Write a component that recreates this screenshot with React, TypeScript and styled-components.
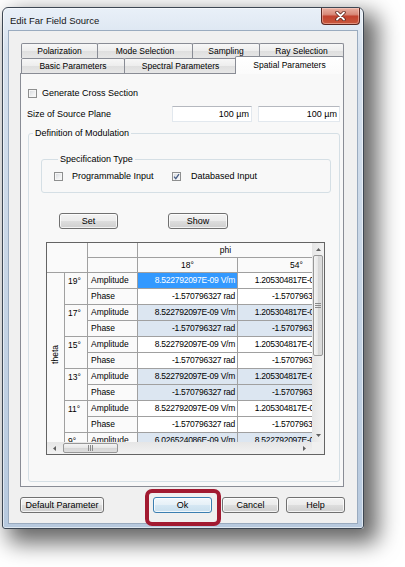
import React from "react";
import styled, { createGlobalStyle, css } from "styled-components";

const GlobalStyle = createGlobalStyle`
  html, body {
    margin: 0;
    padding: 0;
    background: #ffffff;
  }
  body {
    font-family: "Liberation Sans", Arial, sans-serif;
    font-size: 9px;
    color: #000;
  }
  * {
    box-sizing: border-box;
  }
`;

type Row = { label: string; a: string; b: string };
type Group = { angle: string; shaded: boolean; rows: Row[] };

const AMP = "8.522792097E-09 V/m";
const AMP54 = "1.205304817E-08 V/m";
const PHASE = "-1.570796327 rad";

const pair = (a: string, b: string): Row[] => [
  { label: "Amplitude", a, b },
  { label: "Phase", a: PHASE, b: PHASE },
];

const groups: Group[] = [
  { angle: "19°", shaded: false, rows: pair(AMP, AMP54) },
  { angle: "17°", shaded: true, rows: pair(AMP, AMP54) },
  { angle: "15°", shaded: false, rows: pair(AMP, AMP54) },
  { angle: "13°", shaded: true, rows: pair(AMP, AMP54) },
  { angle: "11°", shaded: false, rows: pair(AMP, AMP54) },
  { angle: "9°", shaded: true, rows: pair("6.026524086E-09 V/m", AMP) },
];

const topTabs = [
  { label: "Polarization", w: 77 },
  { label: "Mode Selection", w: 96 },
  { label: "Sampling", w: 68 },
  { label: "Ray Selection", w: 85 },
];

const bottomTabs = [
  { label: "Basic Parameters", w: 104 },
  { label: "Spectral Parameters", w: 113 },
  { label: "Spatial Parameters", w: 109, active: true },
];

// ---------- small drawings ----------
const Arrow = ({ dir }: { dir: "up" | "down" | "left" | "right" }) => {
  const pts = {
    up: "3.5,2 6,5 1,5",
    down: "1,2 6,2 3.5,5",
    left: "2,3.5 5,1 5,6",
    right: "2,1 5,3.5 2,6",
  }[dir];
  return (
    <svg width="7" height="7" viewBox="0 0 7 7">
      <polygon points={pts} fill="#606060" />
    </svg>
  );
};

const Grip = ({ vertical }: { vertical?: boolean }) =>
  vertical ? (
    <svg width="6" height="5" viewBox="0 0 6 5">
      <path d="M0 0.5H6M0 2.5H6M0 4.5H6" stroke="#8a8a8a" strokeWidth="1" />
    </svg>
  ) : (
    <svg width="5" height="6" viewBox="0 0 5 6">
      <path d="M0.5 0V6M2.5 0V6M4.5 0V6" stroke="#8a8a8a" strokeWidth="1" />
    </svg>
  );

const Check = () => (
  <svg width="7" height="7" viewBox="0 0 7 7">
    <path d="M1 3.6L2.8 5.6L6 1.2" fill="none" stroke="#4a5f86" strokeWidth="1.3" />
  </svg>
);

const CloseX = () => (
  <svg width="11" height="10" viewBox="0 0 11 10">
    <path d="M2 1.5L9 8.5M9 1.5L2 8.5" stroke="#5b2118" strokeWidth="3.4" strokeLinecap="round" />
    <path d="M2 1.5L9 8.5M9 1.5L2 8.5" stroke="#ffffff" strokeWidth="1.8" strokeLinecap="round" />
  </svg>
);

// ---------- window ----------
const Stage = styled.div`
  width: 405px;
  height: 567px;
  overflow: hidden;
  padding: 7px 0 0 2px;
`;

const Window = styled.div`
  width: 362px;
  height: 522px;
  border: 1px solid #3d4753;
  border-radius: 6px 6px 3px 3px;
  background: linear-gradient(180deg, #e9f0f8 0%, #d6e1ee 8%, #c8d6e6 50%, #b7c9de 100%);
  box-shadow: inset 0 0 0 1px rgba(255, 255, 255, 0.55), 10px 10px 22px 4px rgba(0, 0, 0, 0.6);
  display: flex;
  flex-direction: column;
`;

const TitleBar = styled.div`
  height: 22px;
  display: flex;
  align-items: flex-start;
`;

const Title = styled.span`
  padding: 7px 0 0 7px;
  font-size: 9.5px;
  line-height: 11px;
  color: #151515;
`;

const CloseButton = styled.div`
  margin-left: auto;
  margin-right: 3px;
  width: 39px;
  height: 17px;
  border: 1px solid #5a2620;
  border-top: none;
  border-radius: 0 0 4px 4px;
  background: linear-gradient(180deg, #eab0a2 0%, #d88a79 40%, #c2432f 52%, #c9583d 100%);
  box-shadow: inset 0 0 0 1px rgba(255, 220, 210, 0.45);
  display: flex;
  align-items: center;
  justify-content: center;
`;

const Client = styled.div`
  flex: 1;
  margin: 0 5px 4px 5px;
  border: 1px solid #9aabbf;
  background: #f0f0f0;
  padding: 12px 13px 0 11px;
  display: flex;
  flex-direction: column;
`;

// ---------- tabs ----------
const TabControl = styled.div`
  width: 324px;
`;

const TabRow = styled.div`
  display: flex;
  align-items: flex-start;
  height: 15px;
  padding-left: 1px;
`;

const Tab = styled.div<{ $w: number; $active?: boolean }>`
  width: ${(p) => p.$w}px;
  height: 15px;
  margin-left: -1px;
  border: 1px solid #898c95;
  border-bottom: none;
  border-radius: 2px 2px 0 0;
  background: linear-gradient(180deg, #f7f7f7 0%, #ededed 50%, #dfdfdf 52%, #e7e7e7 100%);
  display: flex;
  align-items: center;
  justify-content: center;
  font-size: 8.5px;
  line-height: 10px;
  white-space: nowrap;
  &:first-child {
    margin-left: 0;
  }
  ${(p) =>
    p.$active &&
    css`
      height: 18px;
      margin-top: -2px;
      margin-bottom: -1px;
      margin-left: -2px;
      padding-bottom: 2px;
      position: relative;
      z-index: 1;
      background: linear-gradient(180deg, #ffffff 0%, #fbfbfb 100%);
    `}
`;

const Panel = styled.div`
  height: 414px;
  border: 1px solid #898c95;
  background: #f8f8f8;
  padding: 0 3px 0 6px;
  display: flex;
  flex-direction: column;
`;

// ---------- form parts ----------
const CheckRow = styled.div`
  display: flex;
  align-items: center;
  height: 9px;
  margin: 15px 0 0 1px;
`;

const CheckItem = styled.div<{ $w?: number }>`
  display: flex;
  align-items: center;
  ${(p) => p.$w && `width: ${p.$w}px;`}
`;

const CheckBox = styled.span`
  width: 9px;
  height: 9px;
  flex: none;
  border: 1px solid #8e8f8f;
  background: linear-gradient(135deg, #d3d6db 0%, #f0f1f2 60%, #fbfbfb 100%);
  box-shadow: inset 0 0 0 1px #f6f6f6;
  display: flex;
  align-items: center;
  justify-content: center;
`;

const CheckLabel = styled.span<{ $gap: number }>`
  margin-left: ${(p) => p.$gap}px;
  line-height: 11px;
  white-space: nowrap;
`;

const SizeRow = styled.div`
  display: flex;
  align-items: center;
  height: 16px;
  margin-top: 8px;
  gap: 6px;
`;

const SizeLabel = styled.span`
  width: 139px;
`;

const Field = styled.input<{ $w: number }>`
  width: ${(p) => p.$w}px;
  height: 16px;
  border: 1px solid #e2e8ee;
  border-top-color: #b5b8bf;
  background: #ffffff;
  padding: 0 2px 0 0;
  text-align: right;
  font: 9px "Liberation Sans", Arial, sans-serif;
  color: #000;
  outline: none;
`;

const OuterGroup = styled.fieldset`
  margin: 6px 0 0 1px;
  padding: 0 0 26px 0;
  border: 1px solid #d5dfe5;
  border-radius: 3px;
  min-width: 0;
`;

const InnerGroup = styled.fieldset`
  margin: 15px 8px 0 12px;
  padding: 7px 0 11px 12px;
  border: 1px solid #d5dfe5;
  border-radius: 3px;
  min-width: 0;
`;

const Legend = styled.legend`
  margin-left: 4px;
  padding: 0 2px;
  font-size: 9px;
  line-height: 11px;
`;

const SpecRow = styled.div`
  display: flex;
  align-items: center;
  height: 9px;
`;

const ActionRow = styled.div`
  display: flex;
  gap: 50px;
  margin: 20px 0 0 30px;
`;

const Button = styled.button<{ $w: number; $default?: boolean }>`
  width: ${(p) => p.$w}px;
  height: 16px;
  padding: 0;
  font: 9px "Liberation Sans", Arial, sans-serif;
  color: #000;
  border: 1px solid #707070;
  border-radius: 3px;
  background: linear-gradient(180deg, #f3f3f3 0%, #ebebeb 50%, #dddddd 52%, #cfcfcf 100%);
  box-shadow: inset 0 0 0 1px rgba(255, 255, 255, 0.75);
  ${(p) =>
    p.$default &&
    css`
      border-color: #3c7fb1;
      background: linear-gradient(180deg, #f2f8fc 0%, #e5f0f7 50%, #d5e7f3 52%, #c8dfee 100%);
    `}
`;

// ---------- grid ----------
const DataGrid = styled.div`
  margin: 13px 0 0 17px;
  width: 279px;
  height: 213px;
  border: 1px solid #646464;
  background: #ffffff;
  display: grid;
  grid-template-columns: 1fr 12px;
  grid-template-rows: 1fr 12px;
`;

const Viewport = styled.div`
  overflow: hidden;
  min-width: 0;
  min-height: 0;
`;

const Table = styled.table`
  table-layout: fixed;
  border-collapse: collapse;
  width: 291px;
  margin: -1px 0 0 -1px;
  font-size: 8.5px;
  td,
  th {
    border: 1px solid #a0a0a0;
    padding: 0;
    white-space: nowrap;
    overflow: hidden;
    line-height: 13px;
    font-weight: normal;
  }
`;

const Col = styled.col<{ $w: number }>`
  width: ${(p) => p.$w}px;
`;

const HeadRow = styled.tr`
  height: 15px;
`;

const DataRow = styled.tr`
  height: 16px;
`;

const HeadCell = styled.th<{ $pl?: number; $pr?: number }>`
  background: #fafafa;
  text-align: center;
  padding-left: ${(p) => p.$pl ?? 0}px !important;
  padding-right: ${(p) => p.$pr ?? 0}px !important;
`;

const ThetaCell = styled.td`
  background: #fafafa;
  vertical-align: top;
  text-align: center;
  padding-top: 72px !important;
`;

const Vertical = styled.span`
  display: inline-block;
  writing-mode: vertical-rl;
  transform: rotate(180deg);
`;

const AngleCell = styled.td`
  background: #fafafa;
  vertical-align: top;
  padding: 2px 0 0 3px !important;
`;

const LabelCell = styled.td`
  background: #fafafa;
  padding-left: 3px !important;
`;

const ValueCell = styled.td<{ $shaded?: boolean; $selected?: boolean }>`
  text-align: right;
  padding-right: 2px !important;
  letter-spacing: -0.25px;
  background: ${(p) => (p.$selected ? "#3399ff" : p.$shaded ? "#dce6f1" : "#ffffff")};
  color: ${(p) => (p.$selected ? "#ffffff" : "#000000")};
`;

const VScroll = styled.div`
  display: flex;
  flex-direction: column;
  background: linear-gradient(90deg, #e6e6e6, #f2f2f2);
`;

const HScroll = styled.div`
  display: flex;
  align-items: stretch;
  background: linear-gradient(180deg, #e6e6e6, #f2f2f2);
`;

const ArrowBox = styled.div<{ $size: number; $horizontal?: boolean }>`
  flex: none;
  ${(p) => (p.$horizontal ? `width: ${p.$size}px;` : `height: ${p.$size}px;`)}
  display: flex;
  align-items: center;
  justify-content: center;
`;

const Track = styled.div<{ $horizontal?: boolean }>`
  flex: 1;
  display: flex;
  flex-direction: ${(p) => (p.$horizontal ? "row" : "column")};
  padding: ${(p) => (p.$horizontal ? "1px 0 1px 1px" : "0 1px")};
`;

const Thumb = styled.div<{ $horizontal?: boolean }>`
  border: 1px solid #979797;
  border-radius: 2px;
  display: flex;
  align-items: center;
  justify-content: center;
  ${(p) =>
    p.$horizontal
      ? css`
          width: 55px;
          background: linear-gradient(180deg, #f4f4f4 0%, #e6e6e6 50%, #d6d6d6 52%, #dedede 100%);
        `
      : css`
          height: 101px;
          background: linear-gradient(90deg, #f4f4f4 0%, #e6e6e6 50%, #d6d6d6 52%, #dedede 100%);
        `}
`;

const Corner = styled.div`
  background: #f0f0f0;
`;

// ---------- bottom buttons ----------
const ButtonRow = styled.div`
  display: flex;
  align-items: center;
  height: 16px;
  margin: 10px -1px 0 0;
`;

const OkWrap = styled.div`
  position: relative;
  margin-left: auto;
  display: flex;
`;

const Highlight = styled.div`
  position: absolute;
  left: -8px;
  top: -8px;
  width: 76px;
  height: 37px;
  border: 4px solid #a21a31;
  border-radius: 7px;
  pointer-events: none;
`;

const Spaced = styled.div<{ $ml: number }>`
  margin-left: ${(p) => p.$ml}px;
  display: flex;
`;

export default function App() {
  return (
    <>
      <GlobalStyle />
      <Stage>
        <Window>
          <TitleBar>
            <Title>Edit Far Field Source</Title>
            <CloseButton>
              <CloseX />
            </CloseButton>
          </TitleBar>

          <Client>
            <TabControl>
              <TabRow>
                {topTabs.map((t) => (
                  <Tab key={t.label} $w={t.w}>
                    {t.label}
                  </Tab>
                ))}
              </TabRow>
              <TabRow>
                {bottomTabs.map((t) => (
                  <Tab key={t.label} $w={t.w} $active={t.active}>
                    {t.label}
                  </Tab>
                ))}
              </TabRow>

              <Panel>
                <CheckRow>
                  <CheckBox />
                  <CheckLabel $gap={5}>Generate Cross Section</CheckLabel>
                </CheckRow>

                <SizeRow>
                  <SizeLabel>Size of Source Plane</SizeLabel>
                  <Field $w={80} readOnly value="100 µm" />
                  <Field $w={82} readOnly value="100 µm" />
                </SizeRow>

                <OuterGroup>
                  <Legend>Definition of Modulation</Legend>

                  <InnerGroup>
                    <Legend>Specification Type</Legend>
                    <SpecRow>
                      <CheckItem $w={118}>
                        <CheckBox />
                        <CheckLabel $gap={9}>Programmable Input</CheckLabel>
                      </CheckItem>
                      <CheckItem>
                        <CheckBox>
                          <Check />
                        </CheckBox>
                        <CheckLabel $gap={10}>Databased Input</CheckLabel>
                      </CheckItem>
                    </SpecRow>
                  </InnerGroup>

                  <ActionRow>
                    <Button $w={59}>Set</Button>
                    <Button $w={60}>Show</Button>
                  </ActionRow>

                  <DataGrid>
                    <Viewport>
                      <Table>
                        <colgroup>
                          <Col $w={18} />
                          <Col $w={23} />
                          <Col $w={50} />
                          <Col $w={100} />
                          <Col $w={100} />
                        </colgroup>
                        <tbody>
                          <HeadRow>
                            <HeadCell colSpan={2} rowSpan={2} />
                            <HeadCell />
                            <HeadCell colSpan={2} $pr={24}>
                              phi
                            </HeadCell>
                          </HeadRow>
                          <HeadRow>
                            <HeadCell />
                            <HeadCell>18°</HeadCell>
                            <HeadCell $pl={18}>54°</HeadCell>
                          </HeadRow>
                          {groups.map((g, gi) =>
                            g.rows.map((r, ri) => (
                              <DataRow key={`${g.angle}-${r.label}`}>
                                {gi === 0 && ri === 0 && (
                                  <ThetaCell rowSpan={12}>
                                    <Vertical>theta</Vertical>
                                  </ThetaCell>
                                )}
                                {ri === 0 && <AngleCell rowSpan={2}>{g.angle}</AngleCell>}
                                <LabelCell>{r.label}</LabelCell>
                                <ValueCell $shaded={g.shaded} $selected={gi === 0 && ri === 0}>
                                  {r.a}
                                </ValueCell>
                                <ValueCell $shaded={g.shaded}>{r.b}</ValueCell>
                              </DataRow>
                            ))
                          )}
                        </tbody>
                      </Table>
                    </Viewport>

                    <VScroll>
                      <ArrowBox $size={12}>
                        <Arrow dir="up" />
                      </ArrowBox>
                      <Track>
                        <Thumb>
                          <Grip vertical />
                        </Thumb>
                      </Track>
                      <ArrowBox $size={13}>
                        <Arrow dir="down" />
                      </ArrowBox>
                    </VScroll>

                    <HScroll>
                      <ArrowBox $size={15} $horizontal>
                        <Arrow dir="left" />
                      </ArrowBox>
                      <Track $horizontal>
                        <Thumb $horizontal>
                          <Grip />
                        </Thumb>
                      </Track>
                      <ArrowBox $size={15} $horizontal>
                        <Arrow dir="right" />
                      </ArrowBox>
                    </HScroll>

                    <Corner />
                  </DataGrid>
                </OuterGroup>
              </Panel>
            </TabControl>

            <ButtonRow>
              <Button $w={84}>Default Parameter</Button>
              <OkWrap>
                <Button $w={59} $default>
                  Ok
                </Button>
                <Highlight />
              </OkWrap>
              <Spaced $ml={10}>
                <Button $w={57}>Cancel</Button>
              </Spaced>
              <Spaced $ml={7}>
                <Button $w={59}>Help</Button>
              </Spaced>
            </ButtonRow>
          </Client>
        </Window>
      </Stage>
    </>
  );
}
